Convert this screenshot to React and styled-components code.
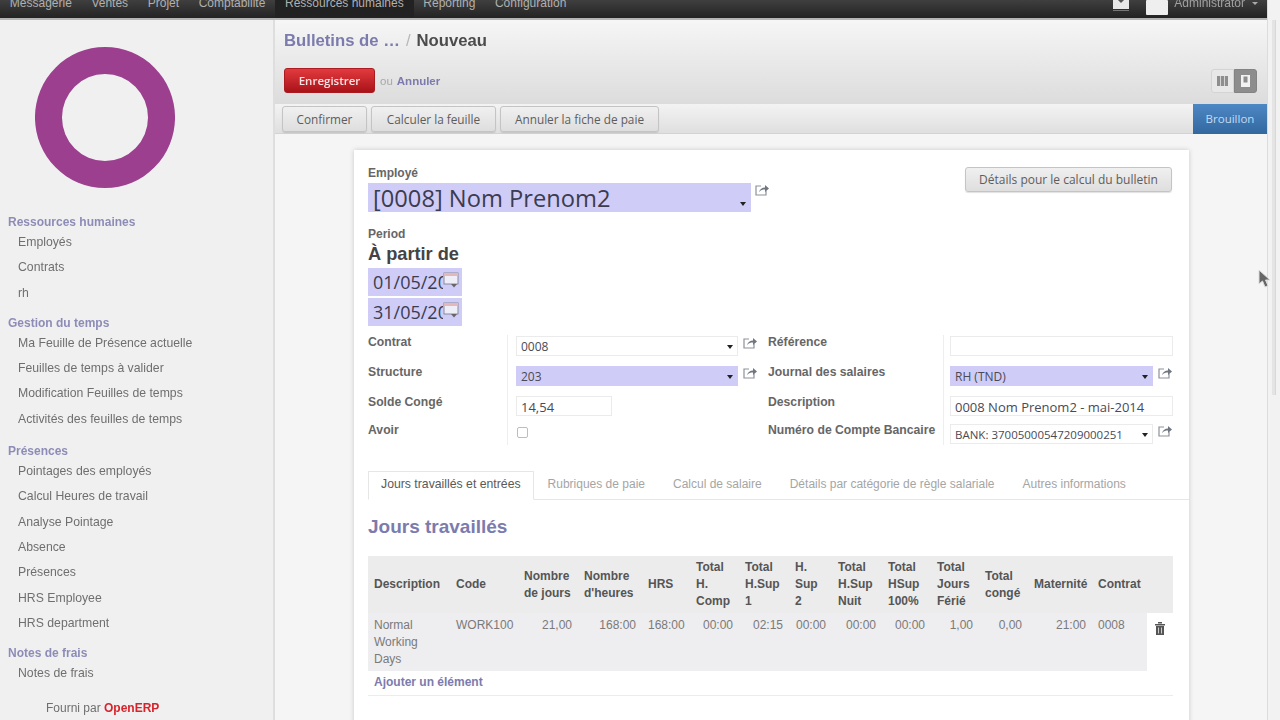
import React from 'react';
import styled, { createGlobalStyle } from 'styled-components';

const Global = createGlobalStyle`
  html, body { margin: 0; padding: 0; height: 100%; overflow: hidden; background: #f4f4f4; }
  * { box-sizing: border-box; }
  #root { height: 720px; }
`;

const UI = '"Liberation Sans", Arial, sans-serif';
const WIDGET = '"Open Sans", "Noto Sans", sans-serif';
const ACCENT = '#7c7bad';

const Page = styled.div`
  position: relative;
  width: 1280px;
  height: 720px;
  overflow: hidden;
  display: flex;
  flex-direction: column;
  font-family: ${UI};
  font-size: 12px;
  color: #4c4c4c;
  filter: blur(0.5px);
`;
const TopBar = styled.div`
  flex: none;
  height: 20px;
  display: flex;
  justify-content: space-between;
  background: linear-gradient(#3f3f3f, #232323);
  border-bottom: 2px solid #b5b5b5;
`;
const TopMenu = styled.nav`
  display: flex;
`;
const TopItem = styled.span`
  height: 18px;
  line-height: 7px;
  padding: 0 9.8px;
  color: #b0b0b0;
  font-size: 12px;
  background: ${p => (p.$active ? '#222' : 'transparent')};
`;
const TopRight = styled.div`
  display: flex;
  align-items: flex-start;
  padding-right: 22px;
  color: #a0a0a0;
  font-size: 12px;
  line-height: 7px;
`;
const Avatar = styled.span`
  width: 22px;
  height: 15px;
  margin: 0 6px 0 17px;
  background: #efefef;
  border-radius: 1px;
`;
const Caret = styled.span`
  margin-left: 7px;
  width: 0;
  height: 0;
  margin-top: 2px;
  border: 3px solid transparent;
  border-top-color: #aaa;
`;
const Body = styled.div`
  flex: 1;
  display: flex;
  min-height: 0;
`;
const Sidebar = styled.aside`
  flex: none;
  width: 275px;
  background: #f0f0f1;
  border-right: 2px solid #dedede;
  display: flex;
  flex-direction: column;
`;
const Logo = styled.svg`
  display: block;
  margin: 27px 0 0 35px;
  width: 140px;
  height: 141px;
  flex: none;
`;
const MenuBlock = styled.div`
  margin-top: ${p => p.$top}px;
`;
const MenuHead = styled.div`
  padding-left: 8px;
  font-weight: bold;
  font-size: 12px;
  line-height: 15px;
  color: ${ACCENT};
  opacity: 0.85;
`;
const MenuItem = styled.div`
  padding-left: 18px;
  height: 25.3px;
  line-height: 25.3px;
  font-size: 12.25px;
  color: #6f6f6f;
  white-space: nowrap;
`;
const Powered = styled.div`
  margin-top: 15px;
  padding-left: 46px;
  font-size: 12px;
  color: #6f6f6f;
  b { color: #d9232b; }
`;
const Main = styled.main`
  flex: none;
  width: 992px;
  display: flex;
  flex-direction: column;
  min-height: 0;
  background: #f6f6f6;
`;
const Header = styled.header`
  flex: none;
  height: 84px;
  padding: 11px 9px 0 9px;
  background: linear-gradient(#f6f6f6, #dcdcdc);
`;
const Crumbs = styled.div`
  font-size: 16.7px;
  font-weight: bold;
  line-height: 19px;
  color: #4c4c4c;
  a { color: ${ACCENT}; }
  i { font-style: normal; font-weight: normal; color: #b8b8b8; margin: 0 6px; }
`;
const ActionRow = styled.div`
  margin-top: 18px;
  display: flex;
  align-items: center;
  justify-content: space-between;
`;
const SaveGroup = styled.div`
  display: flex;
  align-items: center;
  gap: 5px;
  color: #a8a8a8;
  font-size: 11.5px;
  a { color: ${ACCENT}; font-weight: bold; font-size: 11.5px; margin-left: -1px; }
`;
const SaveButton = styled.button`
  width: 91px;
  height: 25px;
  border: 1px solid #aa1a20;
  border-radius: 3px;
  background: linear-gradient(#e23a3e, #a91318);
  color: #fbe3e3;
  font-family: ${WIDGET};
  font-size: 11.5px;
  font-weight: 600;
  padding: 0;
`;
const ViewSwitch = styled.div`
  display: flex;
  margin-right: 1px;
`;
const ViewBtn = styled.span`
  width: 23px;
  height: 24px;
  display: flex;
  align-items: center;
  justify-content: center;
  background: ${p => (p.$on ? '#8d8d8d' : '#e8e8e8')};
  border: 1px solid ${p => (p.$on ? '#838383' : '#d4d4d4')};
  border-radius: ${p => (p.$on ? '0 3px 3px 0' : '3px 0 0 3px')};
`;
const StatusBar = styled.div`
  flex: none;
  height: 30px;
  display: flex;
  align-items: center;
  justify-content: space-between;
  padding-left: 7px;
  background: linear-gradient(#f3f3f3, #dfdfdf);
  border-bottom: 1px solid #d3d3d3;
`;
const StatusButtons = styled.div`
  display: flex;
  gap: 4px;
`;
const GreyButton = styled.button`
  height: 26px;
  padding: 0;
  width: ${p => p.$w}px;
  border: 1px solid #c4c4c4;
  border-radius: 3px;
  background: linear-gradient(#f0f0f0, #dedede);
  box-shadow: 0 1px 1px rgba(0, 0, 0, 0.12);
  color: #5d5d5d;
  font-family: ${WIDGET};
  font-size: 11.8px;
`;
const StateTag = styled.div`
  align-self: stretch;
  width: 74px;
  margin-bottom: -1px;
  padding-bottom: 2px;
  display: flex;
  align-items: center;
  justify-content: center;
  background: linear-gradient(#4d87c4, #33689f);
  color: #c3dcf5;
  font-family: ${WIDGET};
  font-size: 11.5px;
`;
const Content = styled.div`
  flex: 1;
  min-height: 0;
  overflow: hidden;
  padding: 16px 78px 0 79px;
  background: #f5f5f5;
`;
const Sheet = styled.section`
  background: #fff;
  height: 600px;
  padding: 16px 0 0 14px;
  box-shadow: 0 0 5px rgba(0, 0, 0, 0.18);
  position: relative;
`;
const TopFields = styled.div`
  display: flex;
  justify-content: space-between;
  padding-right: 17px;
`;
const SmallLabel = styled.div`
  font-size: 12px;
  font-weight: bold;
  line-height: 14px;
  color: #666;
  margin-top: ${p => p.$top || 0}px;
`;
const BigSelect = styled.div`
  width: 383px;
  height: 29px;
  padding-left: 5px;
  position: relative;
  background: #cfcdf8;
  font-family: ${WIDGET};
  font-size: 23.7px;
  line-height: 31px;
  color: #3c3c50;
`;
const Arrow = styled.span`
  position: absolute;
  right: ${p => p.$right || 5}px;
  bottom: ${p => p.$bottom || 6}px;
  width: 0;
  height: 0;
  border: 3px solid transparent;
  border-bottom: 0;
  border-top: 4px solid #222;
`;
const Inline = styled.div`
  display: flex;
  align-items: flex-start;
  gap: 3px;
  margin-top: 3px;
`;
const DetailButton = styled(GreyButton)`
  height: 25px;
  margin-top: 1px;
  font-size: 12px;
`;
const FromTitle = styled.div`
  font-size: 18.2px;
  font-weight: bold;
  line-height: 26px;
  color: #444;
`;
const DateBox = styled.div`
  width: 94px;
  height: 28px;
  margin-top: ${p => p.$top || 0}px;
  padding-left: 5px;
  position: relative;
  background: #cfcdf8;
  font-family: ${WIDGET};
  font-size: 18px;
  line-height: 28px;
  color: #3c3c50;
`;
const DateText = styled.div`
  width: 70px;
  overflow: hidden;
  white-space: nowrap;
`;
const CalIcon = styled.svg`
  position: absolute;
  right: 2px;
  top: 4px;
  width: 17px;
  height: 17px;
`;
const Columns = styled.div`
  display: flex;
  margin-top: 9px;
`;
const Group = styled.div`
  display: grid;
  grid-template-columns: ${p => p.$cols};
  grid-template-rows: 30px 30px 28px 22px;
  width: ${p => p.$w}px;
`;
const RowLabel = styled.div`
  font-size: 12.2px;
  font-weight: bold;
  line-height: 14px;
  color: #666;
  white-space: nowrap;
`;
const RowField = styled.div`
  padding-left: ${p => p.$left ?? 8}px;
  border-left: 1px solid #eeeeee;
  display: flex;
  align-items: flex-start;
  gap: 4px;
  padding-top: 1px;
`;
const Input = styled.div`
  position: relative;
  width: ${p => p.$w}px;
  height: 20px;
  padding-left: 4px;
  font-family: ${WIDGET};
  font-size: ${p => p.$size || 12}px;
  line-height: 20px;
  color: #4a4a55;
  white-space: nowrap;
  overflow: hidden;
  background: ${p => (p.$req ? '#cfcdf8' : '#fff')};
  border: 1px solid ${p => (p.$req ? '#cfcdf8' : '#ebebeb')};
`;
const Check = styled.span`
  display: block;
  width: 11px;
  height: 11px;
  margin: 3px 0 0 1px;
  border: 1px solid #bdbdbd;
  border-radius: 2px;
  background: #fff;
`;
const Tabs = styled.div`
  margin-top: 26px;
  height: 29px;
  display: flex;
  border-bottom: 1px solid #e6e6e6;
`;
const Tab = styled.div`
  height: ${p => (p.$active ? 29 : 28)}px;
  padding: 0 ${p => (p.$active ? 12 : 13)}px;
  font-size: ${p => (p.$active ? 12.25 : 12)}px;
  line-height: 24px;
  color: ${p => (p.$active ? '#5a5a5a' : '#a5a5a5')};
  background: #fff;
  white-space: nowrap;
  border: 1px solid ${p => (p.$active ? '#e6e6e6' : 'transparent')};
  border-bottom-color: ${p => (p.$active ? '#fff' : 'transparent')};
`;
const SectionTitle = styled.h2`
  margin: 15px 0 0;
  font-size: 19px;
  line-height: 23px;
  font-weight: bold;
  color: ${ACCENT};
`;
const Table = styled.table`
  margin-top: 18px;
  width: 805px;
  table-layout: fixed;
  border-collapse: collapse;
  font-size: 12px;
`;
const Col = styled.col`
  width: ${p => p.$w}px;
`;
const Th = styled.th`
  height: 57px;
  padding: 0 0 0 6px;
  background: #ececec;
  color: #555;
  font-weight: bold;
  text-align: left;
  line-height: 17px;
  vertical-align: middle;
  white-space: pre-line;
`;
const Td = styled.td`
  height: 58px;
  padding: 4px 6px 0;
  background: ${p => (p.$plain ? '#fff' : '#eeedef')};
  color: #7a7a7a;
  line-height: 17px;
  vertical-align: top;
  text-align: ${p => (p.$right ? 'right' : 'left')};
`;
const Trash = styled.svg`
  display: block;
  margin: 5px 0 0 1px;
  width: 12px;
  height: 13px;
`;
const AddRow = styled.div`
  width: 805px;
  height: 25px;
  padding-left: 6px;
  line-height: 22px;
  font-size: 12px;
  font-weight: bold;
  color: ${ACCENT};
  border-bottom: 1px solid #ececec;
`;
const ScrollBar = styled.div`
  position: absolute;
  right: 0;
  top: 0;
  bottom: 0;
  width: 13px;
  padding-top: 20px;
  background: #f2f2f2;
  border-left: 1px solid #dcdcdc;
`;
const Thumb = styled.div`
  margin-left: 4px;
  height: 375px;
  width: 4px;
  background: #e4e4e4;
  border-right: 1px solid #d8d8d8;
`;
const Cursor = styled.svg`
  position: absolute;
  left: 1258px;
  top: 269px;
  width: 14px;
  height: 20px;
`;

const Ext = () => (
  <svg width="16" height="14" viewBox="0 0 16 14" fill="none">
    <path d="M7 3H2v9h10V8" stroke="#8d9199" strokeWidth="1.2" />
    <path d="M5 9c1-3 3-4.500 6-4.500V2l4 3.500L11 9V6.600C9 6.600 6.500 7 5 9z" fill="#6f7681" />
  </svg>
);

const Cal = () => (
  <CalIcon viewBox="0 0 17 17">
    <rect x="1" y="1" width="14" height="11" fill="#eeeef8" stroke="#8a8a9c" />
    <rect x="1" y="1" width="14" height="3" fill="#e4b8b8" />
    <path d="M8 12l3 3.500 3-3.500z" fill="#666" />
  </CalIcon>
);

const menu = [
  { title: 'Ressources humaines', top: 27, items: ['Employés', 'Contrats', 'rh'] },
  { title: 'Gestion du temps', top: 10, items: ['Ma Feuille de Présence actuelle', 'Feuilles de temps à valider', 'Modification Feuilles de temps', 'Activités des feuilles de temps'] },
  { title: 'Présences', top: 12, items: ['Pointages des employés', 'Calcul Heures de travail', 'Analyse Pointage', 'Absence', 'Présences', 'HRS Employee', 'HRS department'] },
  { title: 'Notes de frais', top: 10, items: ['Notes de frais'] },
];

const cols = [82, 68, 60, 64, 48, 49, 50, 43, 50, 49, 48, 49, 64, 55, 26];
const heads = ['Description', 'Code', 'Nombre\nde jours', "Nombre\nd'heures", 'HRS', 'Total\nH.\nComp', 'Total\nH.Sup\n1', 'H.\nSup\n2', 'Total\nH.Sup\nNuit', 'Total\nHSup\n100%', 'Total\nJours\nFérié', 'Total\ncongé', 'Maternité', 'Contrat'];
const cells = [
  ['Normal Working Days'],
  ['WORK100'],
  ['21,00', 1],
  ['168:00', 1],
  ['168:00', 1],
  ['00:00', 1],
  ['02:15', 1],
  ['00:00', 1],
  ['00:00', 1],
  ['00:00', 1],
  ['1,00', 1],
  ['0,00', 1],
  ['21:00', 1],
  ['0008'],
];

export default function App() {
  return (
    <Page>
      <Global />
      <TopBar>
        <TopMenu>
          <TopItem>Messagerie</TopItem>
          <TopItem>Ventes</TopItem>
          <TopItem>Projet</TopItem>
          <TopItem>Comptabilité</TopItem>
          <TopItem $active>Ressources humaines</TopItem>
          <TopItem>Reporting</TopItem>
          <TopItem>Configuration</TopItem>
        </TopMenu>
        <TopRight>
          <svg width="16" height="12" viewBox="0 0 16 12">
            <path d="M0 0h16v9H0z" fill="#e8e8e8" />
            <path d="M5 0l3 3 3-3z" fill="#555" />
            <path d="M0 10.500h16" stroke="#777" />
          </svg>
          <Avatar />
          Administrator
          <Caret />
        </TopRight>
      </TopBar>
      <Body>
        <Sidebar>
          <Logo viewBox="0 0 140 141">
            <path
              fillRule="evenodd"
              fill="#9c3f8f"
              d="M70 0a70 70.500 0 1 0 0 141a70 70.500 0 1 0 0-141zM70 27a43 43.500 0 1 1 0 87a43 43.500 0 1 1 0-87z"
            />
          </Logo>
          {menu.map(b => (
            <MenuBlock key={b.title} $top={b.top}>
              <MenuHead>{b.title}</MenuHead>
              {b.items.map(i => (
                <MenuItem key={i}>{i}</MenuItem>
              ))}
            </MenuBlock>
          ))}
          <Powered>
            Fourni par <b>OpenERP</b>
          </Powered>
        </Sidebar>
        <Main>
          <Header>
            <Crumbs>
              <a>Bulletins de …</a>
              <i>/</i>Nouveau
            </Crumbs>
            <ActionRow>
              <SaveGroup>
                <SaveButton>Enregistrer</SaveButton>
                ou <a>Annuler</a>
              </SaveGroup>
              <ViewSwitch>
                <ViewBtn>
                  <svg width="11" height="10" viewBox="0 0 11 10">
                    <path d="M0 0h11v10H0z" fill="#8e8e8e" />
                    <path d="M3.500 0v10M7.500 0v10" stroke="#d4d4d4" />
                  </svg>
                </ViewBtn>
                <ViewBtn $on>
                  <svg width="11" height="14" viewBox="0 0 11 14">
                    <path d="M1 1h9v12H1z" fill="#f2f2f2" />
                    <path d="M3.500 2.500h4v6h-4z" fill="#8d8d8d" />
                  </svg>
                </ViewBtn>
              </ViewSwitch>
            </ActionRow>
          </Header>
          <StatusBar>
            <StatusButtons>
              <GreyButton $w={85}>Confirmer</GreyButton>
              <GreyButton $w={125}>Calculer la feuille</GreyButton>
              <GreyButton $w={159}>Annuler la fiche de paie</GreyButton>
            </StatusButtons>
            <StateTag>Brouillon</StateTag>
          </StatusBar>
          <Content>
            <Sheet>
              <TopFields>
                <div>
                  <SmallLabel>Employé</SmallLabel>
                  <Inline>
                    <BigSelect>
                      [0008] Nom Prenom2
                      <Arrow />
                    </BigSelect>
                    <Ext />
                  </Inline>
                </div>
                <DetailButton $w={207}>Détails pour le calcul du bulletin</DetailButton>
              </TopFields>
              <SmallLabel $top={15}>Period</SmallLabel>
              <FromTitle>À partir de</FromTitle>
              <DateBox $top={1}>
                <DateText>01/05/2014</DateText>
                <Cal />
              </DateBox>
              <DateBox $top={2}>
                <DateText>31/05/2014</DateText>
                <Cal />
              </DateBox>
              <Columns>
                <Group $cols="139px 261px" $w={400}>
                  <RowLabel>Contrat</RowLabel>
                  <RowField>
                    <Input $w={222}>
                      0008
                      <Arrow $right={4} $bottom={6} />
                    </Input>
                    <Ext />
                  </RowField>
                  <RowLabel>Structure</RowLabel>
                  <RowField>
                    <Input $w={222} $req>
                      203
                      <Arrow $right={4} $bottom={6} />
                    </Input>
                    <Ext />
                  </RowField>
                  <RowLabel>Solde Congé</RowLabel>
                  <RowField>
                    <Input $w={96} $size={13}>14,54</Input>
                  </RowField>
                  <RowLabel>Avoir</RowLabel>
                  <RowField>
                    <Check />
                  </RowField>
                </Group>
                <Group $cols="175px 231px" $w={406}>
                  <RowLabel>Référence</RowLabel>
                  <RowField $left={6}>
                    <Input $w={223} />
                  </RowField>
                  <RowLabel>Journal des salaires</RowLabel>
                  <RowField $left={6}>
                    <Input $w={203} $req>
                      RH (TND)
                      <Arrow $right={4} $bottom={6} />
                    </Input>
                    <Ext />
                  </RowField>
                  <RowLabel>Description</RowLabel>
                  <RowField $left={6}>
                    <Input $w={223} $size={13}>0008 Nom Prenom2 - mai-2014</Input>
                  </RowField>
                  <RowLabel>Numéro de Compte Bancaire</RowLabel>
                  <RowField $left={6}>
                    <Input $w={203} $size={11.5}>
                      BANK: 37005000547209000251
                      <Arrow $right={4} $bottom={6} />
                    </Input>
                    <Ext />
                  </RowField>
                </Group>
              </Columns>
              <Tabs>
                <Tab $active>Jours travaillés et entrées</Tab>
                <Tab>Rubriques de paie</Tab>
                <Tab>Calcul de salaire</Tab>
                <Tab>Détails par catégorie de règle salariale</Tab>
                <Tab>Autres informations</Tab>
              </Tabs>
              <SectionTitle>Jours travaillés</SectionTitle>
              <Table>
                <colgroup>
                  {cols.map((w, i) => (
                    <Col key={i} $w={w} />
                  ))}
                </colgroup>
                <thead>
                  <tr>
                    {heads.map(h => (
                      <Th key={h}>{h}</Th>
                    ))}
                    <Th />
                  </tr>
                </thead>
                <tbody>
                  <tr>
                    {cells.map(([t, r], i) => (
                      <Td key={i} $right={!!r}>{t}</Td>
                    ))}
                    <Td $plain>
                      <Trash viewBox="0 0 12 13">
                        <path d="M1 2h10v1.500H1zM4 0h4v1.500H4zM2 4h8v9H2z" fill="#555" />
                        <path d="M4.500 5.500v6M7.500 5.500v6" stroke="#ccc" />
                      </Trash>
                    </Td>
                  </tr>
                </tbody>
              </Table>
              <AddRow>Ajouter un élément</AddRow>
            </Sheet>
          </Content>
        </Main>
      </Body>
      <ScrollBar>
        <Thumb />
      </ScrollBar>
      <Cursor viewBox="0 0 14 20">
        <path d="M1 1v14l3.500-3 2.500 6 3-1.300-2.500-5.700H12z" fill="#666" stroke="#ddd" strokeWidth="1" />
      </Cursor>
    </Page>
  );
}
